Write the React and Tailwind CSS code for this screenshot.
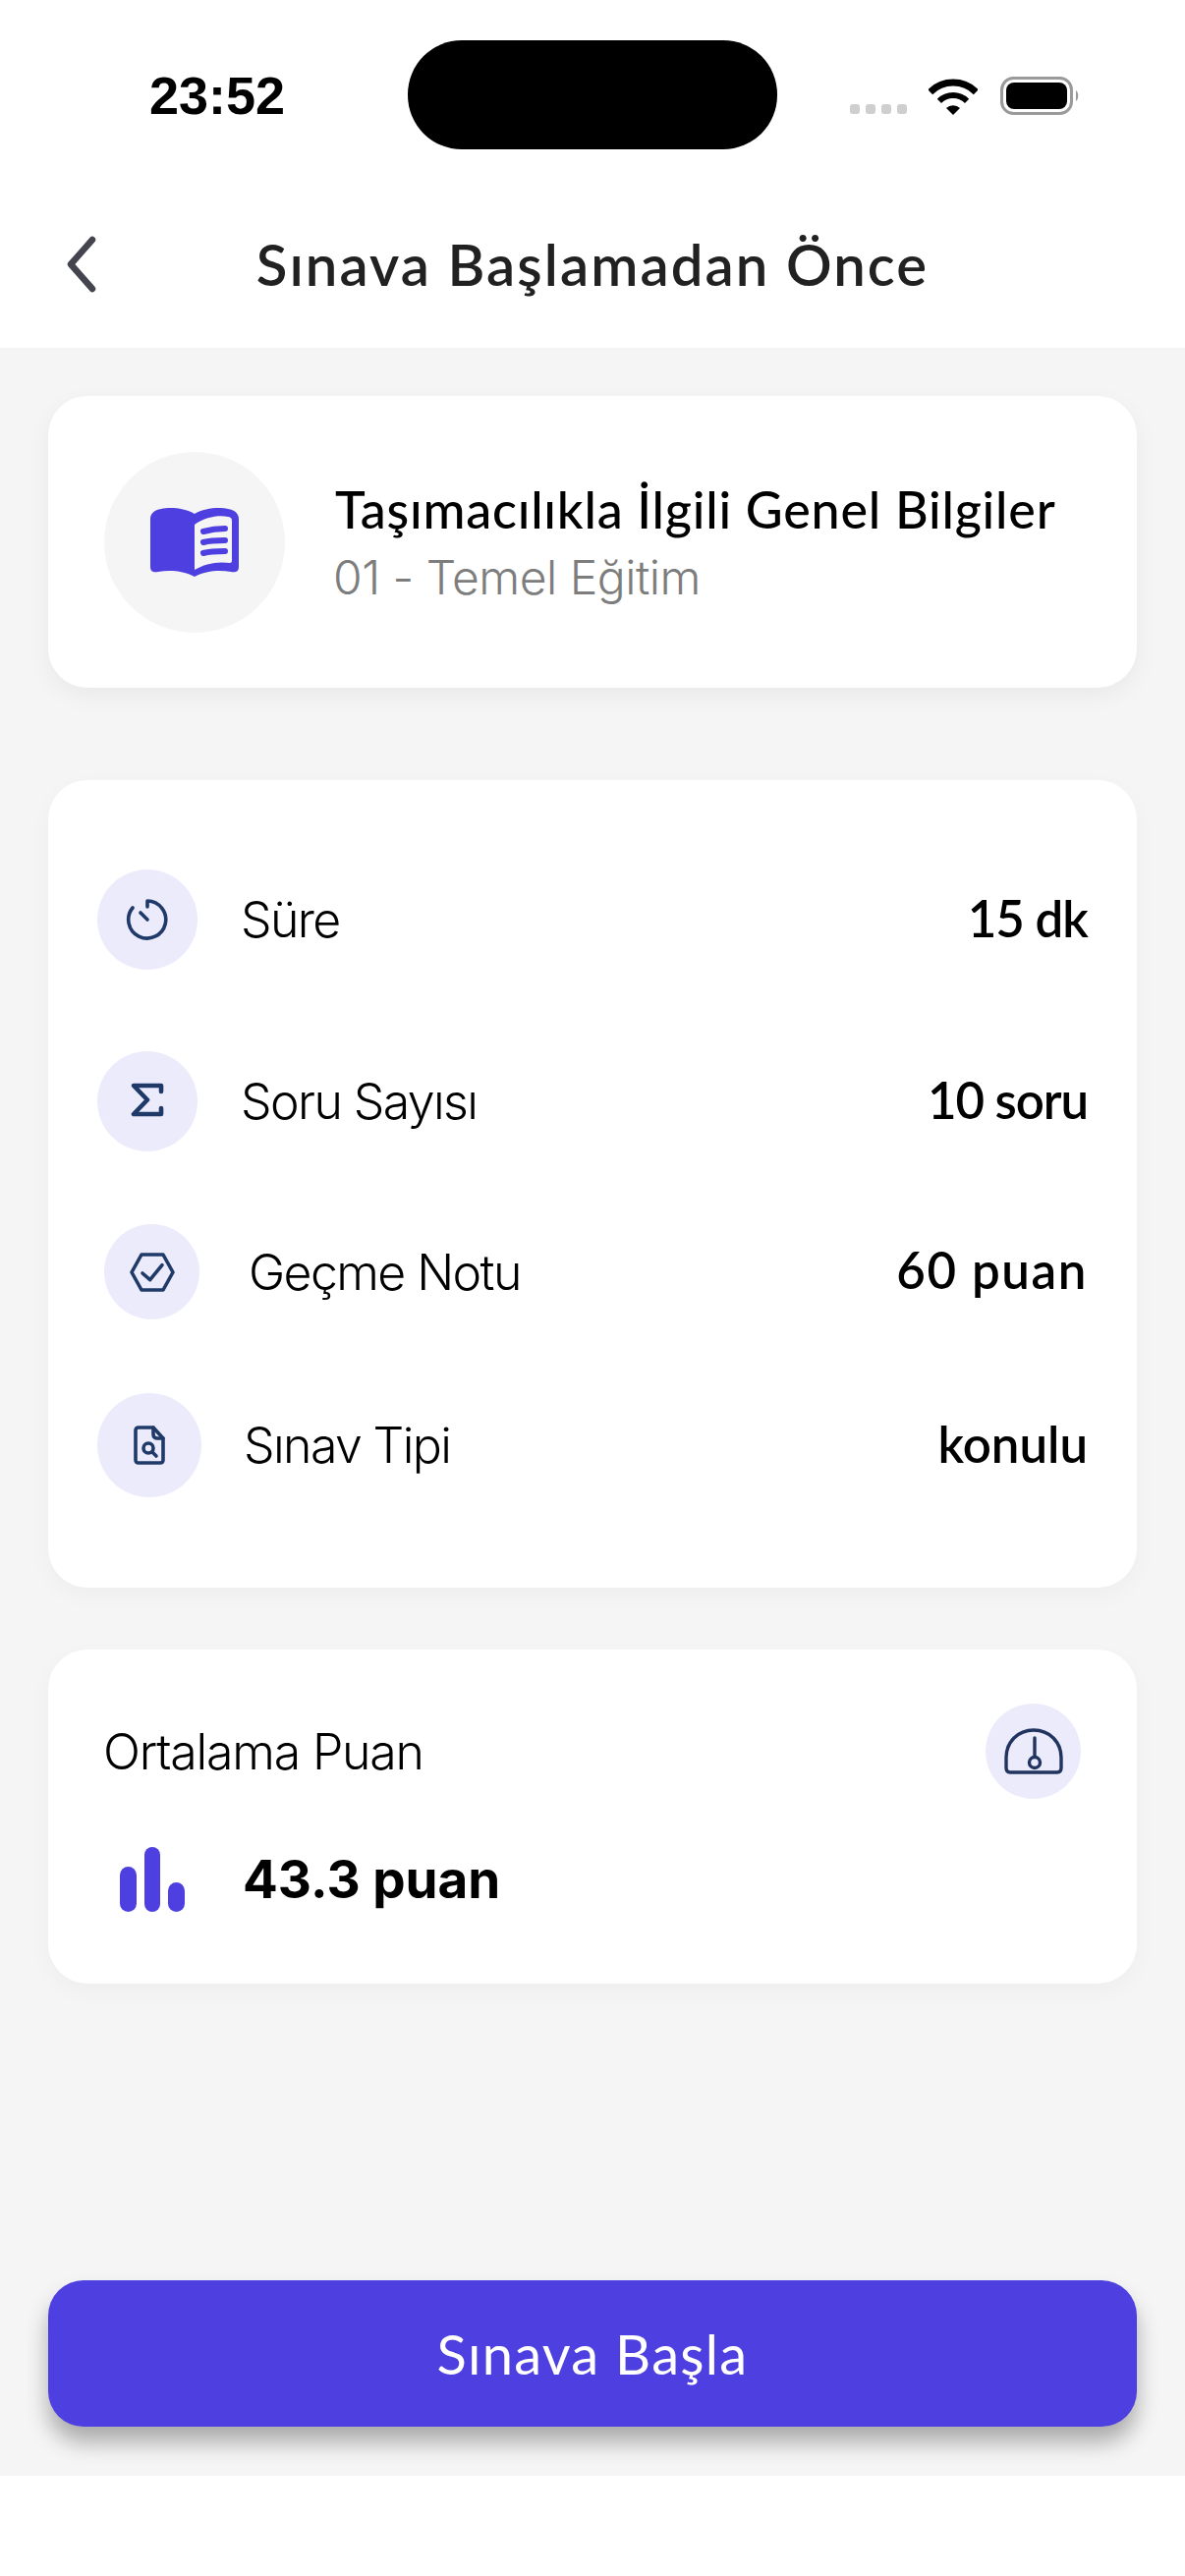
import React from "react";

const head = { fontFamily: '"Lato", "Liberation Sans", sans-serif' };
const body = { fontFamily: '"Inter", "Liberation Sans", sans-serif' };

function Row({ circle, gap, icon, label, value, top, track }) {
  return (
    <div className={`flex items-center justify-between ${top}`}>
      <div className="flex items-center">
        <div className={`flex items-center justify-center rounded-full bg-[#ecebfb] ${circle}`}>{icon}</div>
        <span className={`text-[50px] leading-[60px] font-light text-black tracking-[-1.6px] ${gap}`} style={body}>{label}</span>
      </div>
      <span className={`-mt-[3px] text-[51px] leading-[60px] font-semibold text-black ${track}`} style={head}>{value}</span>
    </div>
  );
}

export default function App() {
  return (
    <div className="flex h-[2622px] w-[1206px] flex-col bg-white">
      <header className="h-[354px] bg-white pt-[41px]">
        <div className="flex h-[111px] items-center pl-[152px]">
          <span className="w-[139px] text-[54px] leading-[60px] font-bold text-black" style={{ fontFamily: '"Liberation Sans", sans-serif' }}>23:52</span>
          <div className="ml-[124px] h-[111px] w-[376px] rounded-[55px] bg-black" />
          <div className="ml-[74px] flex h-[111px] items-center">
            <div className="mt-[29px] flex gap-[6px]">
              <span className="h-[10px] w-[10px] rounded-[3px] bg-[#cfcfcf]" />
              <span className="h-[10px] w-[10px] rounded-[3px] bg-[#cfcfcf]" />
              <span className="h-[10px] w-[10px] rounded-[3px] bg-[#cfcfcf]" />
              <span className="h-[10px] w-[10px] rounded-[3px] bg-[#cfcfcf]" />
            </div>
            <svg className="ml-[22px] mt-[3px]" width="50" height="37" viewBox="0 0 50 37">
              <path d="M1.7 13.7A33 33 0 0 1 48.3 13.7" fill="none" stroke="#000" strokeWidth="7" />
              <path d="M10.9 22.9A20 20 0 0 1 39.1 22.9" fill="none" stroke="#000" strokeWidth="6" />
              <path d="M25 37L18 30A10 10 0 0 1 32 30Z" fill="#000" />
            </svg>
            <svg className="ml-[23px] mt-[3px]" width="82" height="40" viewBox="0 0 82 40">
              <rect x="1.5" y="1.5" width="71" height="36" rx="12" fill="none" stroke="#9a9a9a" strokeWidth="3" />
              <rect x="6" y="6" width="62" height="27" rx="8" fill="#000" />
              <path d="M77 14C80 16 80 23 77 25Z" fill="#9a9a9a" />
            </svg>
          </div>
        </div>
        <div className="relative mt-[62px] flex h-[110px] items-center justify-center">
          <svg className="absolute left-[64px] top-[26px]" width="38" height="58" viewBox="0 0 38 58">
            <path d="M30 4L8 29L30 54" fill="none" stroke="#44444f" strokeWidth="6.5" strokeLinecap="round" strokeLinejoin="round" />
          </svg>
          <h1 className="text-[58px] leading-[70px] font-semibold tracking-[2.1px] text-[#212121]" style={head}>Sınava Başlamadan Önce</h1>
        </div>
      </header>

      <main className="flex flex-1 flex-col bg-[#f5f5f5] px-[49px] pt-[49px] pb-[50px]">
        <section className="flex h-[297px] items-center rounded-[40px] bg-white pl-[57px] shadow-[0_8px_24px_rgba(0,0,0,0.05)]">
          <div className="flex h-[184px] w-[184px] items-center justify-center rounded-full bg-[#f5f5f5]">
            <svg width="90" height="70" viewBox="0 0 90 70">
              <path fillRule="evenodd" fill="#4d3fe0" d="M11 1C20 -1 35 0 45 6C55 0 70 -1 79 1C86 2 90 6 90 11V60C90 65 86 66 82 65C70 63 56 64 45 70C34 64 20 63 8 65C4 66 0 65 0 60V11C0 6 4 2 11 1ZM45 17V63C55 57 68 54 81 56C82 56 83 55 83 54V13C83 10 81 9 79 9C70 7 56 9 45 17Z" />
              <g stroke="#4d3fe0" strokeWidth="6" strokeLinecap="round" fill="none">
                <path d="M54 24C61 22 68 21 76 21" />
                <path d="M54 35C61 33 68 33 76 33" />
                <path d="M54 46C61 44 68 44 76 44" />
              </g>
            </svg>
          </div>
          <div className="ml-[51px] flex flex-col">
            <span className="text-[52px] leading-[64px] font-medium tracking-[0.8px] text-black" style={head}>Taşımacılıkla İlgili Genel Bilgiler</span>
            <span className="mt-[8px] -ml-[2px] text-[48px] leading-[60px] font-light tracking-[-0.5px] text-[#7d7d7d]" style={body}>01 - Temel Eğitim</span>
          </div>
        </section>

        <section className="mt-[94px] h-[822px] rounded-[40px] bg-white pt-[91px] pr-[50px] pl-[50px] shadow-[0_8px_24px_rgba(0,0,0,0.03)]">
          <Row circle="h-[102px] w-[102px]" gap="ml-[44px]" top="" track="tracking-[-1px]" label="Süre" value="15 dk" icon={
            <svg width="44" height="44" viewBox="0 0 44 44" fill="none" stroke="#1f3a68" strokeWidth="3.6" strokeLinecap="round" strokeLinejoin="round">
              <path d="M22 9V3A19 19 0 1 1 7 10" />
              <path d="M15 15L22 22" />
            </svg>
          } />
          <Row circle="h-[102px] w-[102px]" gap="ml-[44px]" top="mt-[83px]" track="tracking-[-1.1px]" label="Soru Sayısı" value="10 soru" icon={
            <svg className="-mt-[3px]" width="34" height="35" viewBox="0 0 34 35" fill="none" stroke="#1f3a68" strokeWidth="4.6" strokeLinecap="round" strokeLinejoin="round">
              <path d="M31 9V3H3L17 17.5L3 32H31V26" />
            </svg>
          } />
          <Row circle="ml-[7px] h-[97px] w-[97px]" gap="ml-[50px]" top="mt-[74px]" track="tracking-[1.6px]" label="Geçme Notu" value="60 puan" icon={
            <svg width="46" height="40" viewBox="0 0 46 40" fill="none" stroke="#1f3a68" strokeWidth="3.6" strokeLinecap="round" strokeLinejoin="round">
              <path d="M12 2H34L44 20L34 38H12L2 20Z" />
              <path d="M13 21L20.7 27.7L33 12.7" />
            </svg>
          } />
          <Row circle="h-[106px] w-[106px]" gap="ml-[43px]" top="mt-[75px]" track="" label="Sınav Tipi" value="konulu" icon={
            <svg width="32" height="40" viewBox="0 0 32 40" fill="none" stroke="#1f3a68" strokeWidth="3.6" strokeLinecap="round" strokeLinejoin="round">
              <path d="M5 2H20L30 13V35C30 37 29 38 27 38H5C3 38 2 37 2 35V5C2 3 3 2 5 2Z" />
              <path d="M20 2V9C20 12 22 13 24 13H30" />
              <circle cx="15" cy="23" r="5" />
              <path d="M19 27L23 31" />
            </svg>
          } />
        </section>

        <section className="mt-[63px] h-[340px] rounded-[40px] bg-white pt-[55px] pr-[57px] pl-[56px] shadow-[0_8px_24px_rgba(0,0,0,0.03)]">
          <div className="flex items-center justify-between">
            <span className="text-[50px] leading-[60px] font-light text-black tracking-[-1.2px]" style={body}>Ortalama Puan</span>
            <div className="flex h-[97px] w-[97px] items-center justify-center rounded-full bg-[#ecebfb]">
              <svg width="60" height="47" viewBox="0 0 60 47" fill="none" stroke="#21345f" strokeWidth="3.4" strokeLinecap="round" strokeLinejoin="round">
                <path d="M6 45H54C57 45 58 43 58 40V30C58 14 46 2 30 2C14 2 2 14 2 30V40C2 43 3 45 6 45Z" />
                <path d="M31 10V28" />
                <circle cx="31" cy="35" r="5.5" />
              </svg>
            </div>
          </div>
          <div className="mt-[47px] flex items-center pl-[17px]">
            <div className="flex h-[66px] items-end gap-[8px]">
              <span className="h-[46px] w-[17px] rounded-full bg-[#4d3fe0]" />
              <span className="h-[66px] w-[16px] rounded-full bg-[#4d3fe0]" />
              <span className="h-[30px] w-[17px] rounded-full bg-[#4d3fe0]" />
            </div>
            <span className="ml-[59px] text-[53px] leading-[70px] font-bold text-black" style={body}>43.3 puan</span>
          </div>
        </section>

        <button className="mt-auto flex h-[149px] w-full items-center justify-center rounded-[36px] bg-[#4d3fe0] text-[56px] font-normal tracking-[1.3px] text-white shadow-[0_16px_22px_rgba(0,0,0,0.3)]" style={head}>
          Sınava Başla
        </button>
      </main>

      <footer className="h-[102px] bg-white" />
    </div>
  );
}
